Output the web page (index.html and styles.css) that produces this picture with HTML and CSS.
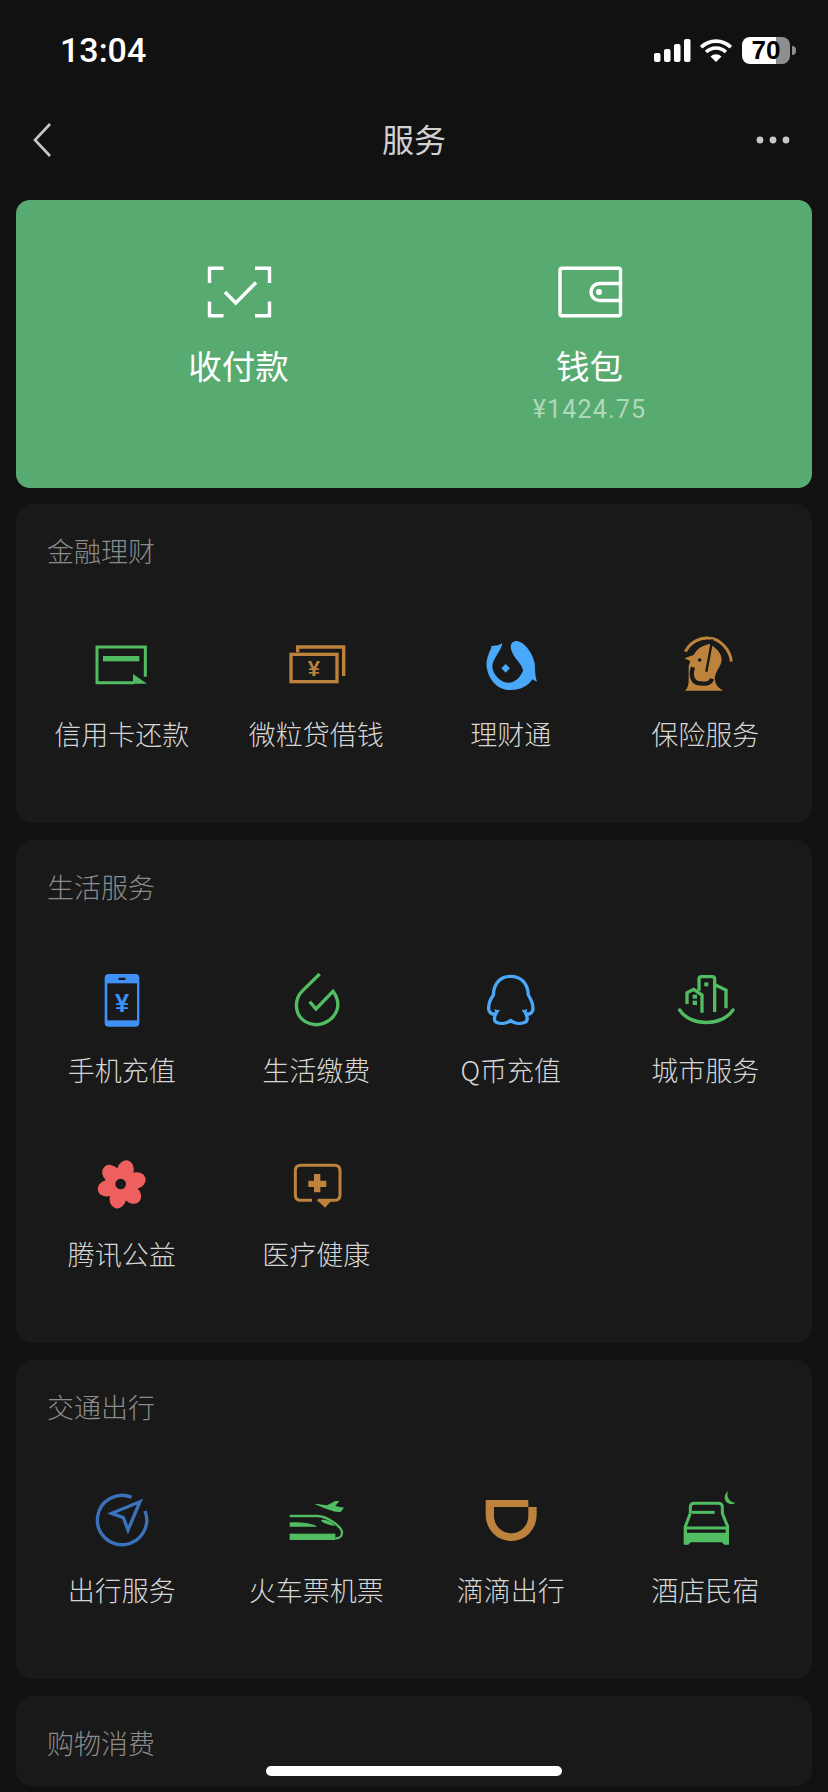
FILE: index.html
```html
<!DOCTYPE html>
<html lang="zh-CN">
<head>
    <meta charset="UTF-8">
    <meta name="viewport" content="width=device-width, initial-scale=1.0">
    <title>服务</title>
    <link rel="stylesheet" href="styles.css">
</head>
<body>
    <div class="status">
        <span class="time">13:04</span>
        <div class="status-right">
            <svg class="signal" width="37" height="23" viewBox="0 0 37 23" fill="#fff">
                <rect x="0" y="14" width="6.5" height="9" rx="2"/>
                <rect x="10" y="10" width="6.5" height="13" rx="2"/>
                <rect x="20" y="5" width="6.5" height="18" rx="2"/>
                <rect x="30" y="0" width="6.5" height="23" rx="2"/>
            </svg>
            <svg class="wifi" width="32" height="24" viewBox="0 0 32 24" fill="none" stroke="#fff" stroke-width="3.6">
                <path d="M1.2 9.2A21 21 0 0 1 30.8 9.2"/>
                <path d="M6.1 14.1A14 14 0 0 1 25.9 14.1"/>
                <path d="M16 24L10.5 18.5A7.8 7.8 0 0 1 21.5 18.5Z" fill="#fff" stroke="none"/>
            </svg>
            <div class="battery"><span>70</span></div>
            <div class="battery-nub"></div>
        </div>
    </div>

    <div class="nav">
        <svg class="back" width="18" height="34" viewBox="0 0 18 34" fill="none" stroke="#c8c8c8" stroke-width="2.6">
            <path d="M17 1L2 17L17 33"/>
        </svg>
        <h1>服务</h1>
        <svg class="more" width="34" height="8" viewBox="0 0 34 8" fill="#c8c8c8">
            <circle cx="4" cy="4" r="3.4"/>
            <circle cx="17" cy="4" r="3.4"/>
            <circle cx="30" cy="4" r="3.4"/>
        </svg>
    </div>

    <div class="pay-card">
        <div class="pay-item">
            <svg width="70" height="56" viewBox="203 264 70 56" fill="none" stroke="#fff" stroke-width="3.4">
                <path d="M222.5 268.300H208.500V283"/>
                <path d="M254 268.300H268.500V283"/>
                <path d="M208.500 301.500V315.700H222.500"/>
                <path d="M268.500 301.500V315.700H254"/>
                <path d="M224 292L234.700 303L255 282.500"/>
            </svg>
            <p class="pay-label">收付款</p>
        </div>
        <div class="pay-item">
            <svg width="70" height="56" viewBox="554 264 70 56" fill="none" stroke="#fff" stroke-width="3.4">
                <rect x="559" y="268.300" width="60.500" height="47.400" rx="2"/>
                <path d="M620 283.500H598.500A8.500 8.500 0 0 0 598.500 300.500H620"/>
                <circle cx="598" cy="292" r="3" fill="#fff" stroke="none"/>
            </svg>
            <p class="pay-label">钱包</p>
            <p class="pay-amount">¥1424.75</p>
        </div>
    </div>

    <div class="card">
        <h2>金融理财</h2>
        <div class="grid">
            <div class="item">
                <svg class="icon" viewBox="93 45 180 180">
                    <path d="M256 170V81H111V188H222" fill="none" stroke="#52bc63" stroke-width="9"/>
                    <rect x="129" y="108" width="109" height="16" fill="#52bc63"/>
                    <path d="M219 162L261 191H219Z" fill="#52bc63"/>
                </svg>
                <span>信用卡还款</span>
            </div>
            <div class="item">
                <svg class="icon" viewBox="677 45 180 180">
                    <path d="M712 97V81H850V168" fill="none" stroke="#bd833d" stroke-width="10"/>
                    <rect x="692" y="103" width="138" height="82" fill="none" stroke="#bd833d" stroke-width="10"/>
                    <text class="yen" x="761" y="167" font-size="66" fill="#bd833d" text-anchor="middle">¥</text>
                </svg>
                <span>微粒贷借钱</span>
            </div>
            <div class="item">
                <svg class="icon" viewBox="1 15 180 180">
                    <path d="M68 38C60 48 45 46 34 48C38 55 30 60 26 75C18 95 18 115 30 140C45 170 70 181 95 180C120 180 145 170 158 148L172 155C165 135 167 120 165 100C158 65 130 32 108 33C95 35 90 45 95 60C102 85 130 105 130 122C122 140 110 155 90 158C65 160 40 135 38 110C38 85 65 65 68 38Z" fill="#4aa8fb"/>
                    <path d="M78 102L91 115L78 128L65 115Z" fill="#4aa8fb"/>
                </svg>
                <span>理财通</span>
            </div>
            <div class="item">
                <svg class="icon" viewBox="14 15 180 180">
                    <path d="M45 65C60 35 90 22 115 24C150 26 180 60 183 95" fill="none" stroke="#bd833d" stroke-width="9"/>
                    <path d="M42 85L70 75C80 55 100 45 118 42L130 50C150 65 160 85 150 105C140 125 130 135 135 155C138 170 150 175 158 182H44C52 175 55 165 55 150V110C55 100 62 98 58 92Z" fill="#bd833d"/>
                    <path d="M126 28L108 125" fill="none" stroke="#191919" stroke-width="7"/>
                    <path d="M68 112C60 135 65 160 90 160C108 163 122 158 125 146" fill="none" stroke="#191919" stroke-width="13"/>
                    <circle cx="88" cy="90" r="5.500" fill="#191919"/>
                </svg>
                <span>保险服务</span>
            </div>
        </div>
    </div>

    <div class="card">
        <h2>生活服务</h2>
        <div class="grid">
            <div class="item">
                <svg class="icon" viewBox="93 33 180 180">
                    <rect x="134" y="42" width="104" height="158" rx="12" fill="#3f91f5"/>
                    <rect x="142" y="70" width="89" height="111" fill="#191919"/>
                    <rect x="175" y="53" width="22" height="7" rx="3" fill="#191919"/>
                    <text class="yen" x="186" y="155" font-size="76" fill="#3f91f5" text-anchor="middle">¥</text>
                </svg>
                <span>手机充值</span>
            </div>
            <div class="item">
                <svg class="icon" viewBox="677 33 180 180">
                    <path d="M778 42L727 92C700 118 702 165 735 185C768 205 815 190 830 150C836 130 830 110 818 94L767 147L748 125" fill="none" stroke="#52bc63" stroke-width="10"/>
                </svg>
                <span>生活缴费</span>
            </div>
            <div class="item">
                <svg class="icon" viewBox="91 33 180 180">
                    <path d="M183 49C150 49 132 72 131 105C122 118 114 135 118 152C121 160 130 165 139 160C134 170 132 182 140 187C152 192 170 192 183 182C196 192 214 192 226 187C235 182 233 170 228 160C237 165 246 160 249 152C253 135 244 118 236 105C235 72 216 49 183 49Z" fill="none" stroke="#4aa8fb" stroke-width="10"/>
                    <path d="M134 147L150 152L139 164Z" fill="#4aa8fb"/>
                    <path d="M233 147L217 152L228 164Z" fill="#4aa8fb"/>
                </svg>
                <span>Q币充值</span>
            </div>
            <div class="item">
                <svg class="icon" viewBox="674 33 180 180">
                    <g fill="none" stroke="#52bc63" stroke-width="10">
                        <path d="M688 150C720 200 815 200 848 150" stroke-linecap="round"/>
                        <path d="M755 158V105L730 88L710 98V132"/>
                        <path d="M746 92V58Q746 50 754 50H785Q793 50 793 58V156"/>
                        <path d="M795 75L827 90V145"/>
                    </g>
                    <g fill="#52bc63">
                        <rect x="762" y="67" width="12" height="12"/>
                        <rect x="727" y="104" width="13" height="12"/>
                        <rect x="727" y="122" width="13" height="13"/>
                    </g>
                </svg>
                <span>城市服务</span>
            </div>
            <div class="item">
                <svg class="icon" viewBox="93 45 180 180">
                    <g fill="#ee5f5f">
                        <circle cx="185" cy="133" r="48"/>
                        <ellipse cx="185" cy="91" rx="25" ry="32" transform="rotate(15 185 133)"/>
                        <ellipse cx="185" cy="91" rx="25" ry="32" transform="rotate(75 185 133)"/>
                        <ellipse cx="185" cy="91" rx="25" ry="32" transform="rotate(135 185 133)"/>
                        <ellipse cx="185" cy="91" rx="25" ry="32" transform="rotate(195 185 133)"/>
                        <ellipse cx="185" cy="91" rx="25" ry="32" transform="rotate(255 185 133)"/>
                        <ellipse cx="185" cy="91" rx="25" ry="32" transform="rotate(315 185 133)"/>
                    </g>
                    <circle cx="182" cy="132" r="16" fill="#191919"/>
                </svg>
                <span>腾讯公益</span>
            </div>
            <div class="item">
                <svg class="icon" viewBox="677 45 180 180">
                    <path d="M755 181H722Q705 181 705 164V93Q705 76 722 76H822Q839 76 839 93V164Q839 181 822 181H772" fill="none" stroke="#bd833d" stroke-width="9"/>
                    <path d="M770 180H815L794 203Z" fill="#bd833d"/>
                    <path d="M761 102H780V122H798V141H780V157H761V141H744V122H761Z" fill="#bd833d"/>
                </svg>
                <span>医疗健康</span>
            </div>
        </div>
    </div>

    <div class="card">
        <h2>交通出行</h2>
        <div class="grid">
            <div class="item">
                <svg class="icon" viewBox="93 33 180 180">
                    <path d="M255 93A74 74 0 1 1 215 52" fill="none" stroke="#3a72bb" stroke-width="10"/>
                    <path d="M240 65L155 100L190 113L204 150Z" fill="none" stroke="#3a72bb" stroke-width="10"/>
                </svg>
                <span>出行服务</span>
            </div>
            <div class="item">
                <svg class="icon" viewBox="677 33 180 180">
                    <g fill="#52bc63">
                        <path d="M763 73C775 70 790 76 800 76L825 63H837L825 78L851 83L842 95C825 98 810 92 763 73Z"/>
                        <path d="M688 127C715 127 755 128 770 140H688Z"/>
                        <path d="M782 120C800 115 820 130 825 138C805 135 785 130 782 120Z"/>
                        <rect x="688" y="161" width="137" height="19"/>
                    </g>
                    <path d="M688 108H770C800 108 845 140 845 158C845 170 835 175 825 175" fill="none" stroke="#52bc63" stroke-width="7"/>
                </svg>
                <span>火车票机票</span>
            </div>
            <div class="item">
                <svg class="icon" viewBox="91 33 180 180">
                    <path fill-rule="evenodd" d="M108 64Q108 60 112 60H236V81H261V105A76.500 78 0 0 1 108 105ZM133 81V108A51.500 52 0 0 0 236 108V81Z" fill="#bd833d"/>
                </svg>
                <span>滴滴出行</span>
            </div>
            <div class="item">
                <svg class="icon" viewBox="674 33 180 180">
                    <g fill="none" stroke="#52bc63" stroke-width="9">
                        <path d="M720 100V82Q720 70 732 70H804Q816 70 816 82V100L833 142"/>
                        <path d="M720 100L704 142"/>
                        <path d="M725 97H793"/>
                        <path d="M704 144H832"/>
                    </g>
                    <g fill="#52bc63">
                        <path d="M700 140H710V158H826V140H836V194H822L815 187H721L714 194H700Z"/>
                        <path d="M833 33C818 45 820 68 840 72C848 73 853 70 856 68C840 68 826 52 833 33Z"/>
                    </g>
                </svg>
                <span>酒店民宿</span>
            </div>
        </div>
    </div>

    <div class="card">
        <h2>购物消费</h2>
    </div>

    <div class="home-bar"></div>
</body>
</html>
```

FILE: styles.css
```css
*{
    margin: 0;
    padding: 0;
    box-sizing: border-box;
}
html,body{
    width: 828px;
    height: 1792px;
    overflow: hidden;
}
body{
    position: relative;
    background: #111111;
    font-family: "Noto Sans CJK SC", "Noto Sans", sans-serif;
}
.status{
    height: 100px;
    padding: 0 32px 0 60px;
    display: flex;
    align-items: center;
    justify-content: space-between;
}
.time{
    font-family: "Roboto", "Liberation Sans", sans-serif;
    font-size: 34px;
    font-weight: 500;
    color: #fff;
}
.status-right{
    display: flex;
    align-items: center;
}
.signal{
    margin-right: 9px;
}
.wifi{
    margin-right: 10px;
}
.battery{
    width: 48px;
    height: 27px;
    border-radius: 8px;
    background: linear-gradient(90deg, #fff 71%, #8e8e8e 71%);
    display: flex;
    align-items: center;
    justify-content: center;
    font-family: "Liberation Sans", sans-serif;
    font-size: 26px;
    font-weight: 700;
    color: #000;
}
.battery-nub{
    width: 4px;
    height: 9px;
    margin-left: 2px;
    border-radius: 0 4px 4px 0;
    background: #8e8e8e;
}
.nav{
    height: 80px;
    margin-bottom: 20px;
    padding: 0 38px;
    display: grid;
    grid-template-columns: 1fr auto 1fr;
    align-items: center;
}
.back{
    margin-left: -5px;
}
.more{
    justify-self: end;
}
h1{
    padding-bottom: 4px;
    font-size: 32px;
    font-weight: 400;
    color: #d0d0d0;
}
.pay-card{
    margin: 0 16px 16px;
    height: 288px;
    padding: 64px 47px 0;
    background: #58ab70;
    border-radius: 14px;
    display: flex;
}
.pay-item{
    flex: 1;
    display: flex;
    flex-direction: column;
    align-items: center;
}
.pay-label{
    margin-top: 23px;
    font-size: 33.5px;
    line-height: 44px;
    color: #fff;
}
.pay-amount{
    margin-top: 8px;
    font-family: "Roboto", "Liberation Sans", sans-serif;
    font-size: 25px;
    line-height: 30px;
    letter-spacing: 1.2px;
    color: #b0d8bb;
}
.card{
    margin: 0 16px 17px;
    padding: 27px 10px 23px 8px;
    background: #191919;
    border-radius: 16px;
}
h2{
    padding-left: 23px;
    font-size: 27px;
    line-height: 40px;
    font-weight: 300;
    color: #8c8c8c;
}
.grid{
    margin-top: 45px;
    display: grid;
    grid-template-columns: repeat(4, 1fr);
}
.item{
    height: 184px;
    padding-top: 19px;
    display: flex;
    flex-direction: column;
    align-items: center;
}
.item span{
    margin-top: 19px;
    padding-left: 1px;
    font-size: 27px;
    line-height: 40px;
    font-weight: 300;
    color: #d6d6d6;
    white-space: nowrap;
}
.icon{
    width: 60px;
    height: 60px;
    overflow: visible;
}
.yen{
    font-family: "Liberation Sans", sans-serif;
    font-weight: 700;
}
.home-bar{
    position: absolute;
    left: 266px;
    bottom: 16px;
    width: 296px;
    height: 10px;
    border-radius: 5px;
    background: #fff;
}
```
